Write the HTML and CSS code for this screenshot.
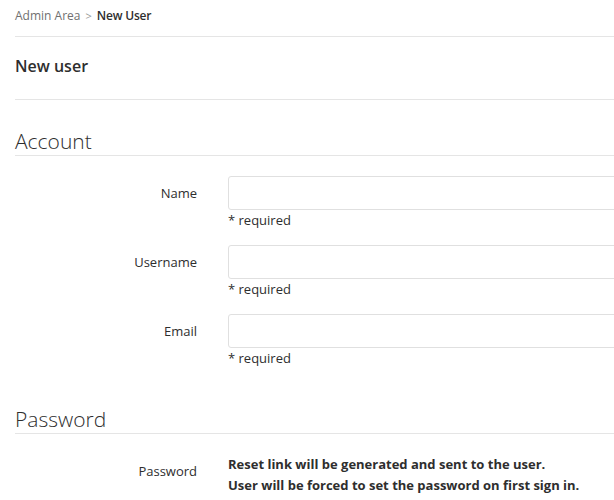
FILE: index.html
```html
<!DOCTYPE html>
<html>
<head>
<meta charset="utf-8">
<link rel="stylesheet" href="styles.css">
</head>
<body>
<div class="page">
  <nav class="breadcrumb">
    <span class="crumb">Admin Area</span>
    <span class="sep">&gt;</span>
    <span class="crumb current">New User</span>
  </nav>
  <h3 class="page-title">New user</h3>
  <form class="user-form">
    <section class="form-section">
      <h4 class="section-title">Account</h4>
      <div class="form-rows">
        <div class="form-row">
          <label class="form-label">Name</label>
          <div class="form-field">
            <input type="text" class="form-input">
            <div class="help">* required</div>
          </div>
        </div>
        <div class="form-row">
          <label class="form-label">Username</label>
          <div class="form-field">
            <input type="text" class="form-input">
            <div class="help">* required</div>
          </div>
        </div>
        <div class="form-row">
          <label class="form-label">Email</label>
          <div class="form-field">
            <input type="text" class="form-input">
            <div class="help">* required</div>
          </div>
        </div>
      </div>
    </section>
    <section class="form-section">
      <h4 class="section-title">Password</h4>
      <div class="form-rows">
        <div class="form-row">
          <label class="form-label">Password</label>
          <div class="form-field">
            <p class="pw-note">Reset link will be generated and sent to the user.<br>User will be forced to set the password on first sign in.</p>
          </div>
        </div>
      </div>
    </section>
  </form>
</div>
</body>
</html>
```
FILE: styles.css
```css
html, body {
  margin: 0;
  padding: 0;
  background: #fff;
  overflow: hidden;
}
body {
  font-family: "Open Sans", "Noto Sans", sans-serif;
  font-size: 13px;
  color: #2e2e2e;
}
.page {
  padding-left: 15px;
}
.breadcrumb {
  height: 30px;
  display: flex;
  align-items: center;
  gap: 5px;
  font-size: 12px;
  border-bottom: 1px solid #e5e5e5;
  padding-bottom: 6px;
}
.crumb { color: #707070; }
.crumb.current { color: #2e2e2e; font-weight: 600; letter-spacing: -0.2px; }
.sep { color: #999; font-size: 11px; }
.page-title {
  margin: 0;
  font-size: 16px;
  font-weight: 600;
  height: 62px;
  line-height: 58px;
  border-bottom: 1px solid #e5e5e5;
}
.user-form {
  padding-top: 3px;
}
.section-title {
  margin: 0;
  padding-top: 24px;
  font-size: 21px;
  font-weight: 300;
  line-height: 28px;
  border-bottom: 1px solid #e5e5e5;
}
.form-rows {
  padding-top: 20px;
}
.form-row {
  display: flex;
  gap: 31px;
  margin-bottom: 15px;
}
.form-row:last-child {
  margin-bottom: 13px;
}
.form-label {
  width: 182px;
  flex: none;
  text-align: right;
  padding-top: 8px;
  line-height: 18px;
  font-size: 13px;
}
.form-field {
  flex: 1;
}
.form-input {
  display: block;
  box-sizing: border-box;
  width: 500px;
  height: 34px;
  border: 1px solid #e0e0e0;
  border-radius: 3px;
  margin: 0;
}
.help {
  font-size: 13px;
  line-height: 20px;
}
.pw-note {
  margin: 0;
  font-weight: 700;
  font-size: 13px;
  line-height: 21px;
}
```
